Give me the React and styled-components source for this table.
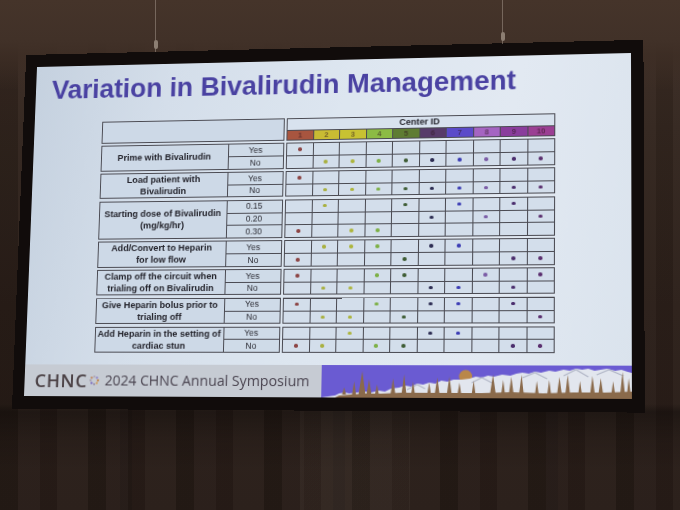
import React from 'react';
import styled, { createGlobalStyle } from 'styled-components';

const Global = createGlobalStyle`
  html, body { margin: 0; padding: 0; background: #261b16; }
  * { box-sizing: border-box; }
`;

const Room = styled.div`
  position: relative;
  width: 680px;
  height: 510px;
  overflow: hidden;
  background:
    linear-gradient(to bottom, rgba(0,0,0,0) 0, rgba(0,0,0,0) 404px, rgba(0,0,0,0.3) 412px, rgba(0,0,0,0.1) 440px, rgba(0,0,0,0) 470px),
    linear-gradient(to bottom, #45342a 0, #413128 40px, rgba(62,46,37,0.85) 55px, rgba(62,46,37,0) 90px),
    linear-gradient(to right, rgba(255,235,210,0) 0, rgba(255,235,210,0) 300px, rgba(255,235,210,0.04) 300px, rgba(255,235,210,0.04) 410px, rgba(255,235,210,0) 410px),
    repeating-linear-gradient(90deg, rgba(0,0,0,0.12) 0 18px, rgba(255,255,255,0.02) 18px 40px, rgba(0,0,0,0.06) 40px 57px, rgba(255,255,255,0.025) 57px 88px),
    repeating-linear-gradient(90deg, rgba(0,0,0,0) 0 120px, rgba(0,0,0,0.1) 120px 132px, rgba(0,0,0,0) 132px 213px),
    linear-gradient(to bottom, #3d2d25 0%, #33261f 25%, #2b1f19 60%, #271c17 100%);
`;

const Wire = styled.div`
  position: absolute;
  top: 0;
  left: ${p => p.$x}px;
  width: 1px;
  height: ${p => p.$h}px;
  background: rgba(160, 145, 135, 0.55);
  &::after {
    content: '';
    position: absolute;
    left: -1.5px;
    bottom: 3px;
    width: 4px;
    height: 9px;
    border-radius: 2px;
    background: #8c7e72;
  }
`;

const Frame = styled.div`
  width: 624px;
  height: 366px;
  padding: 13px 12px;
  background: #110c0b;
  transform-origin: 0 0;
`;

const Slide = styled.div`
  width: 600px;
  height: 340px;
  display: flex;
  flex-direction: column;
  background: linear-gradient(100deg, #c5d1df 0%, #d4deea 22%, #dde6f0 50%, #e2e9f2 75%, #dae3ed 100%);
  font-family: "Liberation Sans", Arial, sans-serif;
`;

const Title = styled.h1`
  margin: 10.5px 0 0 16.7px;
  font-size: 27.4px;
  line-height: 27.4px;
  font-weight: 700;
  color: #4a42a2;
  white-space: nowrap;
`;

const Table = styled.div`
  margin: 21px 0 0 70.5px;
  display: flex;
  flex-direction: column;
  gap: 2.4px;
  width: 457px;
`;

const Row = styled.div`
  display: flex;
  gap: 2.5px;
`;

const Box = styled.div`
  width: ${p => p.$w}px;
  display: grid;
  grid-template-columns: ${p => p.$cols};
  grid-template-rows: ${p => p.$rows};
  gap: 1px;
  background: #4a4a52;
  border: 1px solid #4a4a52;
`;

const Cell = styled.div`
  display: flex;
  align-items: center;
  justify-content: center;
  background: ${p => p.$bg || '#d3deeb'};
  color: #23232b;
`;

const Blank = styled(Cell)`
  grid-column: 1 / 3;
  grid-row: 1 / 3;
  background: #cdd9e7;
`;

const Label = styled(Cell)`
  grid-row: span ${p => p.$span};
  background: #cdd9e7;
  font-size: 9.2px;
  line-height: 12px;
  font-weight: 700;
  text-align: center;
  white-space: nowrap;
`;

const Opt = styled(Cell)`
  background: #cfdbe8;
  font-size: 8.5px;
  line-height: 1;
  color: #2a2a32;
`;

const CenterHead = styled(Cell)`
  grid-column: 1 / -1;
  font-size: 9px;
  font-weight: 700;
  line-height: 1;
  background: #d8e2ee;
`;

const Swatch = styled(Cell)`
  background: ${p => p.$bg};
  font-size: 7.5px;
  font-weight: 700;
  line-height: 1;
  color: rgba(45, 20, 30, 0.55);
`;

const Dot = styled.span`
  width: 3.6px;
  height: 3.6px;
  border-radius: 50%;
  background: ${p => p.$c};
`;

const Footer = styled.div`
  margin-top: auto;
  height: 32px;
  display: flex;
`;

const FooterLeft = styled.div`
  width: 301px;
  flex: none;
  display: flex;
  align-items: center;
  padding-left: 10.5px;
  background: #c6cbd3;
  color: #4a4248;
`;

const Brand = styled.span`
  font-family: "Open Sans", "Liberation Sans", sans-serif;
  font-weight: 600;
  font-size: 18.5px;
  letter-spacing: 0.6px;
  line-height: 1;
  color: #4b4145;
`;

const Logo = styled.svg`
  margin: 0 6px 0 2px;
  flex: none;
`;

const Event = styled.span`
  font-family: "Open Sans", "Liberation Sans", sans-serif;
  font-weight: 500;
  font-size: 14.2px;
  line-height: 1;
  color: #4a4450;
  white-space: nowrap;
`;

const FooterRight = styled.div`
  flex: 1;
  height: 32px;
  background: #6a5bd2;
`;

const Scene = styled.svg`
  display: block;
  width: 100%;
  height: 32px;
`;

const headColors = ['#a8553f', '#c9bb33', '#c8c232', '#8cbb44', '#5e7c32', '#573b6a', '#5b4bc9', '#a565c2', '#8a3d9c', '#9b3f93'];
const dotColors = ['#8c4444', '#a9b040', '#adb53c', '#7db046', '#3e5c34', '#2c2c52', '#3b3cb4', '#7b5ca6', '#4a2c6c', '#5a2e6e'];

const all = [2, 3, 4, 5, 6, 7, 8, 9, 10];
const groups = [
  { label: ['Prime with Bivalirudin'], rows: [['Yes', [1]], ['No', all]] },
  { label: ['Load patient with', 'Bivalirudin'], rows: [['Yes', [1]], ['No', all]] },
  { label: ['Starting dose of Bivalirudin', '(mg/kg/hr)'], rows: [['0.15', [2, 5, 7, 9]], ['0.20', [6, 8, 10]], ['0.30', [1, 3, 4]]] },
  { label: ['Add/Convert to Heparin', 'for low flow'], rows: [['Yes', [2, 3, 4, 6, 7]], ['No', [1, 5, 9, 10]]] },
  { label: ['Clamp off the circuit when', 'trialing off on Bivalirudin'], rows: [['Yes', [1, 4, 5, 8, 10]], ['No', [2, 3, 6, 7, 9]]] },
  { label: ['Give Heparin bolus prior to', 'trialing off'], rows: [['Yes', [1, 4, 6, 7, 9]], ['No', [2, 3, 5, 10]]] },
  { label: ['Add Heparin in the setting of', 'cardiac stun'], rows: [['Yes', [3, 6, 7]], ['No', [1, 2, 4, 5, 9, 10]]] },
];

function quadMatrix(W, H, px, py, pts) {
  const [[x0, y0], [x1, y1], [x2, y2], [x3, y3]] = pts;
  const dx1 = x1 - x2, dx2 = x3 - x2, dx3 = x0 - x1 + x2 - x3;
  const dy1 = y1 - y2, dy2 = y3 - y2, dy3 = y0 - y1 + y2 - y3;
  const den = dx1 * dy2 - dx2 * dy1;
  const g = (dx3 * dy2 - dx2 * dy3) / den;
  const h = (dx1 * dy3 - dx3 * dy1) / den;
  const a = x1 - x0 + g * x1;
  const b = x3 - x0 + h * x3;
  const d = y1 - y0 + g * y1;
  const e = y3 - y0 + h * y3;
  const A = a / W, B = b / H, D = d / W, E = e / H, G = g / W, Hh = h / H;
  const C = x0 - A * px - B * py;
  const F = y0 - D * px - E * py;
  const I = 1 - G * px - Hh * py;
  return `matrix3d(${A},${D},0,${G},${B},${E},0,${Hh},0,0,1,0,${C},${F},0,${I})`;
}

const ROW = '11.7px';

function Group({ g }) {
  const n = g.rows.length;
  const rows = `repeat(${n}, ${ROW})`;
  return (
    <Row>
      <Box $w={188} $cols="1fr 55px" $rows={rows}>
        <Label $span={n}>
          <div>
            {g.label.map((l, i) => (
              <React.Fragment key={i}>
                {i > 0 && <br />}
                {l}
              </React.Fragment>
            ))}
          </div>
        </Label>
        {g.rows.map(([opt], i) => (
          <Opt key={i} style={{ gridColumn: 2 }}>{opt}</Opt>
        ))}
      </Box>
      <Box $w={266} $cols="repeat(10, 1fr)" $rows={rows}>
        {g.rows.flatMap(([opt, marks], r) =>
          headColors.map((_, c) => (
            <Cell key={`${r}-${c}`}>
              {marks.includes(c + 1) && <Dot $c={dotColors[c]} />}
            </Cell>
          ))
        )}
      </Box>
    </Row>
  );
}

const ridge = [
  [14, 30], [18, 28], [24, 27], [28, 28], [36, 27], [44, 26], [50, 27], [58, 25], [64, 26], [70, 23],
  [78, 22], [84, 20], [90, 21], [96, 18], [102, 19], [108, 17], [114, 18], [120, 15], [126, 16], [132, 14],
  [140, 14], [148, 13], [154, 11], [160, 12], [166, 10], [172, 11], [180, 9], [188, 10], [194, 8], [200, 7],
  [206, 8], [212, 6], [218, 7], [226, 5], [232, 6], [240, 4], [246, 5], [252, 3], [258, 4], [264, 3], [270, 5],
  [276, 4], [282, 3], [290, 5], [296, 4], [302, 6], [306, 7],
];
const snowPath = 'M0 32 ' + ridge.map(([x, y]) => `L${x} ${y}`).join(' ') + ' L306 32 Z';

const trees = [
  [23, 22, 4], [33, 16, 4], [41, 6, 7], [48, 14, 5], [56, 19, 4], [72, 13, 5], [83, 9, 5], [92, 16, 4],
  [108, 17, 4], [116, 12, 5], [128, 11, 5], [138, 17, 4], [152, 15, 4], [171, 9, 6], [181, 14, 4],
  [189, 11, 5], [199, 9, 5], [214, 15, 4], [226, 14, 4], [236, 11, 5], [244, 9, 5], [256, 15, 4],
  [268, 10, 5], [276, 12, 5], [288, 15, 4], [297, 6, 5], [303, 12, 4],
];
const treePath = trees.map(([x, t, w]) => `M${x} ${t} L${x + w / 2} 29 L${x - w / 2} 29 Z`).join(' ');
const basePath = 'M14 32 L18 30 L30 29 L45 28 L60 28 L80 27 L100 27 L130 27 L160 27 L190 26 L220 27 L250 26 L280 26 L306 25 L306 32 Z';
const shadePath = 'M86 24 L96 19 L104 23 M150 17 L160 12 L170 17 M200 12 L212 7 L224 13 M240 10 L252 4 L264 11 M272 9 L284 4 L298 10';

function Mountains() {
  return (
    <Scene viewBox="0 0 306 32" preserveAspectRatio="none">
      <circle cx="144" cy="11" r="6.5" fill="#b9874a" />
      <path d={snowPath} fill="#e2e6ee" />
      <path d={shadePath} fill="none" stroke="#b3b8c8" strokeWidth="1.2" />
      <path d={basePath} fill="#8a6a4b" />
      <path d={treePath} fill="#8a6a4b" />
    </Scene>
  );
}

function RingLogo() {
  const cols = ['#c0844a', '#d2a060', '#9a90a8', '#7a6ac0', '#a8a0b0', '#c08050', '#b0a8b8', '#8c7cc8'];
  return (
    <Logo width="10" height="10" viewBox="0 0 10 10">
      {cols.map((c, i) => {
        const a = (i / cols.length) * Math.PI * 2;
        return <circle key={i} cx={5 + 3.8 * Math.cos(a)} cy={5 + 3.8 * Math.sin(a)} r="1.15" fill={c} />;
      })}
    </Logo>
  );
}

export default function App() {
  const transform = quadMatrix(600, 340, 12, 13, [[37, 67], [631, 53], [632, 399], [24, 396]]);
  return (
    <>
      <Global />
      <Room>
        <Frame style={{ transform }}>
          <Slide>
            <Title>Variation in Bivalirudin Management</Title>
            <Table>
              <Row>
                <Box $w={188} $cols="1fr 55px" $rows="11px 9px">
                  <Blank />
                </Box>
                <Box $w={266} $cols="repeat(10, 1fr)" $rows="11px 9px">
                  <CenterHead>Center ID</CenterHead>
                  {headColors.map((c, i) => (
                    <Swatch key={i} $bg={c}>{i + 1}</Swatch>
                  ))}
                </Box>
              </Row>
              {groups.map((g, i) => (
                <Group key={i} g={g} />
              ))}
            </Table>
            <Footer>
              <FooterLeft>
                <Brand>CHNC</Brand>
                <RingLogo />
                <Event>2024 CHNC Annual Symposium</Event>
              </FooterLeft>
              <FooterRight>
                <Mountains />
              </FooterRight>
            </Footer>
          </Slide>
        </Frame>
        <Wire $x={155} $h={52} />
        <Wire $x={502} $h={44} />
      </Room>
    </>
  );
}
